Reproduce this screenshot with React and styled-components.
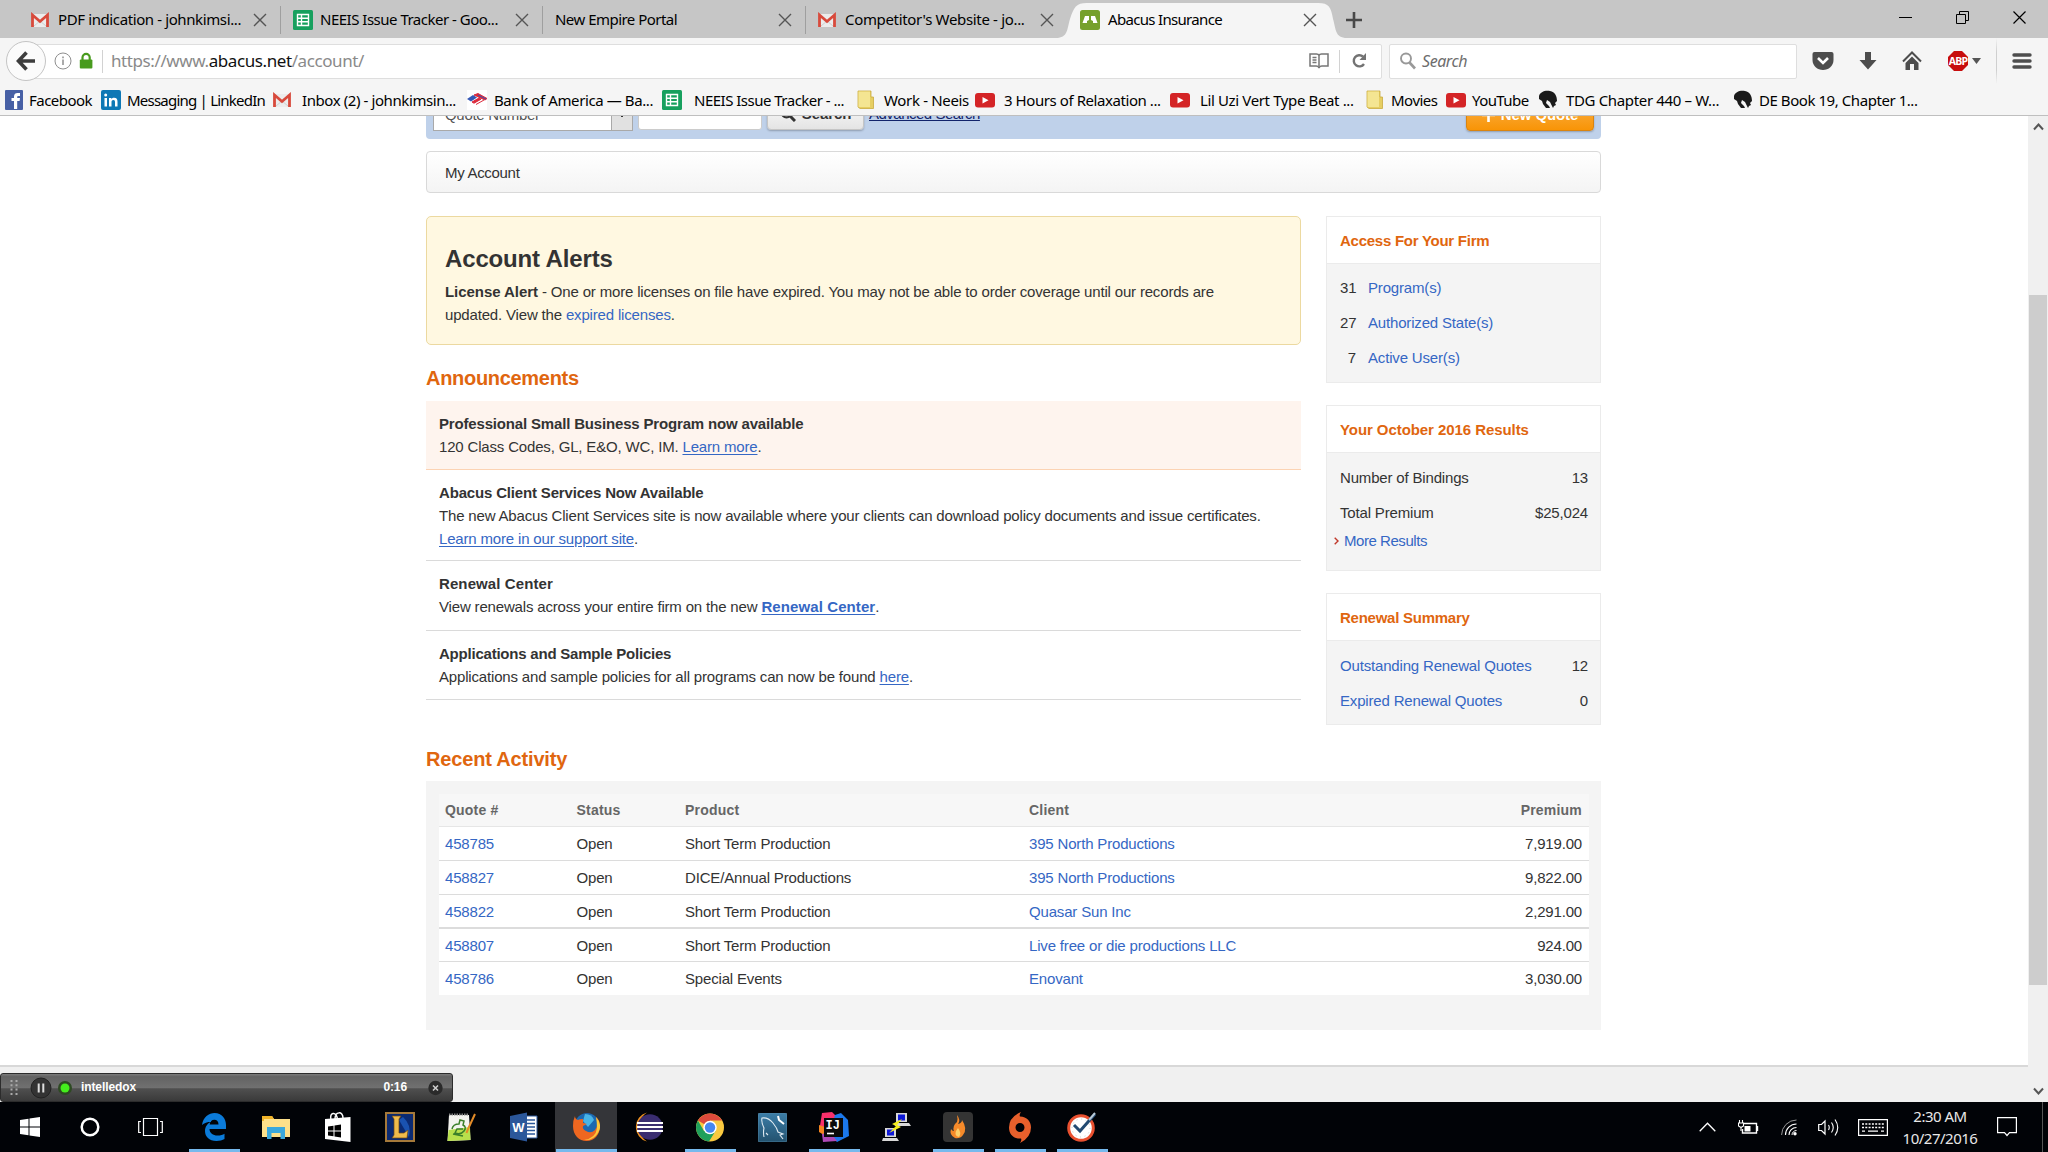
import React from 'react';
import styled, { createGlobalStyle, css } from 'styled-components';

const GlobalStyle = createGlobalStyle`
  * { box-sizing: border-box; }
  body { margin: 0; background: #fff; overflow: hidden; }
  h2, h3, p { margin: 0; }
  svg { display: block; flex: none; }
`;

const uiFont = '"Noto Sans", "Open Sans", sans-serif';
const pageFont = '"Liberation Sans", Arial, sans-serif';

/* ---------- window ---------- */

const Screen = styled.div`
  position: relative;
  display: flex;
  flex-direction: column;
  width: 2048px;
  height: 1152px;
  overflow: hidden;
`;

const Chrome = styled.header`
  flex: none;
  height: 116px;
  background: #f5f5f5;
  border-bottom: 1px solid #bfbfbf;
  font: 15px/20px ${uiFont};
  color: #000;
`;

const Label = styled.span`
  white-space: nowrap;
  letter-spacing: ${p => p.$ls || 0}px;
`;

/* ---------- tabs ---------- */

const TabStrip = styled.div`
  display: flex;
  height: 38px;
  background: #c6c6c6;
`;

const Tab = styled.div`
  position: relative;
  display: flex;
  align-items: center;
  flex: none;
  width: ${p => p.$width}px;
  padding: 2px 14px 0 ${p => p.$pad}px;
`;

const Divider = styled.i`
  position: absolute;
  right: 0;
  top: 6px;
  width: 1px;
  height: 28px;
  background: #9f9f9f;
`;

const TabShape = styled.svg`
  position: absolute;
  left: -12px;
  top: 0;
`;

const TabIcon = styled.span`
  position: relative;
  flex: none;
  width: 20px;
  margin-right: ${p => p.$gap}px;
`;

const TabTitle = styled(Label)`
  position: relative;
  flex: 1;
  margin-bottom: 2px;
`;

const TabClose = styled.svg`
  position: relative;
  stroke: #555;
  stroke-width: 1.4;
  fill: none;
`;

const NewTab = styled.svg`
  margin: 12px 0 0 15px;
`;

const WindowButtons = styled.div`
  display: flex;
  align-items: center;
  gap: 44px;
  height: 34px;
  margin-left: auto;
  padding-right: 22px;
`;

/* ---------- navigation ---------- */

const NavBar = styled.div`
  display: flex;
  align-items: center;
  height: 46px;
  padding-left: 6px;
`;

const BackButton = styled.button`
  position: relative;
  z-index: 1;
  flex: none;
  display: flex;
  align-items: center;
  justify-content: center;
  width: 40px;
  height: 40px;
  padding: 0;
  border: 1px solid #c4c4c4;
  border-radius: 50%;
  background: #fbfbfb;
`;

const Field = styled.div`
  display: flex;
  align-items: center;
  flex: none;
  width: ${p => p.$width}px;
  height: 35px;
  margin-left: ${p => p.$left}px;
  padding: 0 14px 0 ${p => p.$pad}px;
  border: 1px solid #dedede;
  border-radius: 2px;
  background: #fff;
`;

const SiteIcons = styled.span`
  display: flex;
  align-items: center;
  gap: 2px;
`;

const Url = styled.span`
  flex: 1;
  font-size: 17px;
  letter-spacing: -0.41px;
  color: #8a8a8a;
  b { font-weight: 400; color: #111; }
`;

const FieldRule = styled.i`
  width: 1px;
  height: 23px;
  margin: 0 ${p => p.$right}px 0 ${p => p.$left}px;
  background: #d2d2d2;
`;

const Placeholder = styled.span`
  margin-left: 5px;
  font-size: 16px;
  font-style: italic;
  letter-spacing: -0.45px;
  color: #6d6d6d;
`;

const NavTools = styled.div`
  display: flex;
  align-items: center;
  flex: 1;
  padding-left: 15px;
`;

const Tool = styled.span`
  display: flex;
  justify-content: center;
  width: 22px;
  margin-right: ${p => p.$gap}px;
`;

const ToolRule = styled.i`
  width: 1px;
  height: 46px;
  margin: 0 15px 0 13px;
  background: linear-gradient(#f5f5f5, #cfcfcf 30%, #cfcfcf 70%, #f5f5f5);
`;

/* ---------- bookmarks ---------- */

const Bookmarks = styled.nav`
  display: flex;
  align-items: center;
  height: 31px;
  padding-left: 4px;
`;

const Bookmark = styled.span`
  display: flex;
  align-items: center;
  flex: none;
  width: ${p => p.$width}px;
  gap: ${p => p.$gap || 6}px;
`;

/* ---------- page ---------- */

const Viewport = styled.div`
  display: flex;
  flex: none;
  height: 986px;
  overflow: hidden;
  font: 15px/23px ${pageFont};
  letter-spacing: -0.17px;
  color: #333;
`;

const Page = styled.div`
  display: flex;
  flex-direction: column;
  width: 2028px;
`;

const Container = styled.main`
  width: 1175px;
  margin: -35px 0 0 426px;
`;

const SearchBar = styled.div`
  display: flex;
  align-items: flex-end;
  height: 58px;
  padding: 0 7px 8px;
  border-radius: 4px;
  background: #bfd1ea;
`;

const Select = styled.div`
  display: flex;
  justify-content: space-between;
  width: 200px;
  height: 34px;
  padding-left: 11px;
  border: 1px solid #a9a9a9;
  background: #fff;
  line-height: 34px;
  letter-spacing: -0.3px;
  color: #555;
`;

const SelectArrow = styled.span`
  display: flex;
  justify-content: center;
  width: 21px;
  padding-top: 15px;
  border-left: 1px solid #a9a9a9;
  background: #e1e1e1;
`;

const TextInput = styled.div`
  width: 124px;
  height: 34px;
  margin: 0 5px 1px;
  border: 1px solid #ccc;
  border-radius: 3px;
  background: #fff;
`;

const Button = styled.button`
  display: flex;
  align-items: center;
  justify-content: center;
  gap: 6px;
  width: ${p => (p.$primary ? 128 : 97)}px;
  height: 34px;
  margin: 0 0 ${p => (p.$primary ? 0 : 1)}px;
  padding: 1px 0 0;
  border: 1px solid #c5c5c5;
  border-radius: 4px;
  background: linear-gradient(#fff, #e4e4e4);
  box-shadow: 0 1px 2px rgba(0, 0, 0, 0.25);
  font: bold 15px ${pageFont};
  letter-spacing: -0.1px;
  color: #333;
  ${p => p.$primary && css`
    margin-left: auto;
    border-color: #d98411;
    background: linear-gradient(#fbb450, #f89406);
    color: #fff;
  `}
`;

const AdvancedLink = styled.a`
  margin: 0 0 6px 5px;
  letter-spacing: -0.5px;
  color: #12246b;
  text-decoration: underline;
`;

const Breadcrumb = styled.div`
  height: 42px;
  margin-top: 12px;
  padding: 1px 18px 0;
  border: 1px solid #d9d9d9;
  border-radius: 4px;
  background: linear-gradient(#fff, #f4f4f4);
  line-height: 40px;
  letter-spacing: -0.3px;
`;

const Columns = styled.div`
  display: grid;
  grid-template-columns: 875px 275px;
  justify-content: space-between;
  margin-top: 23px;
`;

const Alert = styled.section`
  height: 129px;
  padding: 27px 80px 0 18px;
  border: 1px solid #ecd9a0;
  border-radius: 5px;
  background: #fff8e1;
`;

const AlertTitle = styled.h2`
  margin-bottom: 6px;
  font-size: 24px;
  line-height: 30px;
  letter-spacing: -0.15px;
`;

const Heading = styled.h2`
  margin: ${p => p.$top}px 0 ${p => p.$bottom}px;
  font-size: 20px;
  line-height: 24px;
  letter-spacing: ${p => p.$ls}px;
  color: #e0660f;
`;

const Link = styled.a`
  color: #3567c4;
  text-decoration: ${p => (p.$underline ? 'underline' : 'none')};
  text-underline-offset: 2px;
`;

const Strong = styled.b`
  letter-spacing: ${p => p.$ls}px;
`;

const Notice = styled.article`
  height: ${p => p.$height}px;
  padding: 11px 13px 0;
  border-bottom: 1px solid ${p => (p.$highlight ? '#fcd3b3' : '#dadada')};
  background: ${p => (p.$highlight ? '#fef4ee' : '#fff')};
`;

const Side = styled.aside`
  display: flex;
  flex-direction: column;
  gap: 22px;
`;

const Card = styled.section`
  height: ${p => p.$height}px;
  border: 1px solid #ebebeb;
  background: #f4f4f4;
`;

const CardTitle = styled.h3`
  height: 47px;
  margin-bottom: ${p => p.$gap}px;
  padding: 1px 13px 0;
  border-bottom: 1px solid #ebebeb;
  background: #fff;
  font-size: 15px;
  line-height: 46px;
  letter-spacing: ${p => p.$ls}px;
  color: #e0660f;
`;

const CardRow = styled.div`
  display: flex;
  justify-content: space-between;
  padding: 0 12px 0 13px;
  line-height: 35px;
`;

const CountRow = styled.div`
  display: grid;
  grid-template-columns: 16px auto;
  justify-content: start;
  gap: 12px;
  padding-left: 13px;
  line-height: 35px;
  > :first-child { text-align: right; }
`;

const MoreRow = styled.div`
  display: flex;
  align-items: center;
  gap: 5px;
  margin-top: -1px;
  padding-left: 7px;
  letter-spacing: -0.45px;
`;

const Panel = styled.section`
  height: 249px;
  padding: 13px 12px 0 13px;
  background: #f4f4f4;
`;

const Row = styled.div`
  display: grid;
  grid-template-columns: 131.5px 108.5px 344px 1fr auto;
  align-items: center;
  height: ${p => p.$height}px;
  padding: 0 7px 0 6px;
  border-bottom: ${p => p.$rule}px solid #dcdcdc;
  background: #fff;
`;

const HeadRow = styled(Row)`
  border-color: #e6e6e6;
  background: #f7f7f7;
  font-size: 14px;
  font-weight: bold;
  letter-spacing: 0.2px;
  color: #666;
`;

const PageFooter = styled.footer`
  height: 37px;
  margin-top: 35px;
  border-top: 2px solid #d8d8d8;
  background: #f0f0f0;
`;

const Scrollbar = styled.div`
  display: flex;
  flex-direction: column;
  align-items: center;
  justify-content: space-between;
  width: 20px;
  padding: 7px 0;
  background: #f0f0f0;
`;

const Thumb = styled.div`
  width: 18px;
  height: 690px;
  margin: 0 0 -61px;
  background: #cdcdcd;
`;

/* ---------- recorder ---------- */

const Recorder = styled.div`
  position: absolute;
  left: 0;
  top: 1073px;
  display: flex;
  align-items: center;
  width: 453px;
  height: 29px;
  padding: 0 9px;
  border: 1px solid #2c2c2c;
  border-radius: 3px;
  background: linear-gradient(#7b7b7b 0, #636363 10%, #707070 50%, #4f4f4f 55%, #3a3a3a);
  font: bold 12px ${pageFont};
  letter-spacing: -0.1px;
  color: #fff;
`;

const RecorderName = styled.span`
  flex: 1;
  margin: 0 0 2px 9px;
`;

const Elapsed = styled.span`
  margin: 0 20px 2px 0;
`;

const PauseIcon = styled.svg`
  margin: 0 6px 0 11px;
`;

/* ---------- taskbar ---------- */

const Taskbar = styled.footer`
  display: flex;
  height: 50px;
  background: #010307;
  font: 15px/22px ${uiFont};
  color: #e8e8e8;
`;

const Task = styled.div`
  display: flex;
  align-items: center;
  justify-content: center;
  flex: none;
  width: ${p => p.$width || 62}px;
  height: 50px;
  padding-right: ${p => p.$shift || 0}px;
  background-color: ${p => (p.$active ? '#343539' : 'transparent')};
  background-image: linear-gradient(#76b9ed, #76b9ed);
  background-repeat: no-repeat;
  background-position: bottom;
  background-size: ${p => (p.$active ? '61px 3px' : p.$open ? '51px 3px' : '0 0')};
`;

const Tray = styled.div`
  display: flex;
  align-items: center;
  margin-left: auto;
`;

const TrayIcon = styled.span`
  margin-right: ${p => p.$gap}px;
`;

const Clock = styled.div`
  width: 80px;
  margin-right: 17px;
  text-align: center;
  letter-spacing: -0.5px;
`;

const ShowDesktop = styled.i`
  width: 6px;
  height: 50px;
  margin-left: 25px;
  border-left: 1px solid #555;
`;

/* ---------- icons ---------- */

const Gmail = () => (
  <svg width="18" height="20" viewBox="0 0 18 20">
    <rect x="1" y="4" width="16" height="13" fill="#ececec" />
    <path d="M3 16 9 11l6 5" fill="none" stroke="#cfcfcf" />
    <path d="M1.500 17V5L9 11.500 16.500 5v12" fill="none" stroke="#d84a3c" strokeWidth="2.800" />
  </svg>
);

const Sheets = () => (
  <svg width="20" height="20" viewBox="0 0 20 20">
    <rect width="20" height="20" rx="1.500" fill="#17a05e" />
    <path d="M4.500 4.500h11v11h-11zM4.500 8.200h11M4.500 11.800h11M8.500 4.500v11" fill="none" stroke="#fff" strokeWidth="1.400" />
  </svg>
);

const Abacus = () => (
  <svg width="20" height="20" viewBox="0 0 20 20">
    <rect width="20" height="20" rx="2.500" fill="#76a02c" />
    <path d="M5 6h4v4l-2 1v2H2.500zM15 6h-4v4l2 1v2h4.500z" fill="#fff" />
  </svg>
);

const Facebook = () => (
  <svg width="19" height="20" viewBox="0 0 19 20">
    <rect x="1" width="18" height="20" rx="1" fill="#4760a5" />
    <path d="M10 19v-8H7.500V8H10V6.500C10 4 11.500 3 13.500 3H16v3h-1.500c-1 0-1.300.4-1.300 1.200V8H16l-.4 3h-2.400v8z" fill="#fff" />
  </svg>
);

const LinkedIn = () => (
  <svg width="20" height="20" viewBox="0 0 20 20">
    <rect width="20" height="20" rx="2" fill="#0e78b5" />
    <path d="M3.500 8H6v8.500H3.500zM8 8h2.400v1.200C11 8.300 12 7.800 13.200 7.800c2.400 0 3.300 1.500 3.300 3.900v4.800H14V12c0-1.300-.4-2.100-1.600-2.100s-1.900.9-1.900 2.200v4.400H8z" fill="#fff" />
    <circle cx="4.700" cy="5" r="1.500" fill="#fff" />
  </svg>
);

const BankFlag = () => (
  <svg width="20" height="20" viewBox="0 0 20 20">
    <rect width="20" height="20" fill="#fff" />
    <path d="M0 9 6 5l4 2.500-6 4z" fill="#3558b5" />
    <path d="m7 5 4-1.500 9 5-2 1.500zM5 12l7-4 2 1.200-7 4zM9 14.500l8-4.500" fill="#dc2a3c" stroke="#dc2a3c" />
    <path d="m11 5 8 4" stroke="#3558b5" />
  </svg>
);

const Folder = () => (
  <svg width="18" height="20" viewBox="0 0 18 20">
    <path d="M1 1h13v6h2.500v11.500H3L1 17z" fill="#e6ce62" stroke="#c9ab3f" strokeWidth=".8" />
    <path d="M1.500 1.500H13V17H1.500z" fill="#f4e592" />
  </svg>
);

const YouTube = () => (
  <svg width="20" height="20" viewBox="0 0 20 20">
    <rect y="3" width="20" height="14.500" rx="3" fill="#d42426" />
    <path d="m7.500 7 6 3.200-6 3.300z" fill="#fff" />
  </svg>
);

const Horse = () => (
  <svg width="18" height="20" viewBox="0 0 18 20">
    <path d="M0 6C1 2 6 0 11 1c5 1 7 5 7 10l-2 2 1 2-2 1-1 2-3-6-3-2-1 3 3 3 1 2H7l-3-4-1-3-3-2z" fill="#1b1b1b" />
  </svg>
);

const Close = () => (
  <TabClose width="14" height="14" viewBox="0 0 14 14"><path d="m1 1 12 12M13 1 1 13" /></TabClose>
);

const bookmarks = [
  [Facebook, 'Facebook', -0.53, 97],
  [LinkedIn, 'Messaging | LinkedIn', -0.78, 172],
  [Gmail, 'Inbox (2) - johnkimsin...', -0.41, 194, 11],
  [BankFlag, 'Bank of America — Ba...', -0.4, 195, 7],
  [Sheets, 'NEEIS Issue Tracker - ...', -0.51, 195, 12],
  [Folder, 'Work - Neeis', -0.33, 118, 9],
  [YouTube, '3 Hours of Relaxation ...', -0.43, 195, 9],
  [YouTube, 'Lil Uzi Vert Type Beat ...', -0.37, 196, 10],
  [Folder, 'Movies', -0.5, 80, 7],
  [YouTube, 'YouTube', -0.59, 93],
  [Horse, 'TDG Chapter 440 – W...', -0.35, 195, 9],
  [Horse, 'DE Book 19, Chapter 1...', -0.44, 200, 7],
];

const quotes = [
  ['458785', 'Short Term Production', '395 North Productions', '7,919.00', 34, 1],
  ['458827', 'DICE/Annual Productions', '395 North Productions', '9,822.00', 34, 1],
  ['458822', 'Short Term Production', 'Quasar Sun Inc', '2,291.00', 34, 2],
  ['458807', 'Short Term Production', 'Live free or die productions LLC', '924.00', 33, 1],
  ['458786', 'Special Events', 'Enovant', '3,030.00', 33, 0],
];

function BrowserChrome() {
  return (
    <Chrome>
      <TabStrip>
        <Tab $width={281} $pad={31}><TabIcon $gap={7}><Gmail /></TabIcon><TabTitle $ls={-0.39}>PDF indication - johnkimsi...</TabTitle><Close /><Divider /></Tab>
        <Tab $width={262} $pad={12}><TabIcon $gap={7}><Sheets /></TabIcon><TabTitle $ls={-0.5}>NEEIS Issue Tracker - Goo...</TabTitle><Close /><Divider /></Tab>
        <Tab $width={263} $pad={12}><TabTitle $ls={-0.53}>New Empire Portal</TabTitle><Close /><Divider /></Tab>
        <Tab $width={262} $pad={12}><TabIcon $gap={7}><Gmail /></TabIcon><TabTitle $ls={-0.33}>Competitor's Website - jo...</TabTitle><Close /></Tab>
        <Tab $width={263} $pad={12}>
          <TabShape width="291" height="38" viewBox="0 0 291 38">
            <path d="M0 38C12 38 11 29 14 19 18 7 20 3 31 3H262c11 0 13 4 15 16 3 10 2 19 14 19z" fill="#f5f5f5" />
          </TabShape>
          <TabIcon $gap={8}><Abacus /></TabIcon><TabTitle $ls={-0.68}>Abacus Insurance</TabTitle><Close />
        </Tab>
        <NewTab width="16" height="16" viewBox="0 0 16 16"><path d="M8 0v16M0 8h16" stroke="#484848" strokeWidth="2.600" /></NewTab>
        <WindowButtons>
          <svg width="13" height="13" viewBox="0 0 13 13"><path d="M0 6.500h13" stroke="#000" /></svg>
          <svg width="13" height="13" viewBox="0 0 13 13"><path d="M.5 3.500h9v9h-9zM3.500 3.500v-3h9v9h-3" fill="none" stroke="#000" /></svg>
          <svg width="13" height="13" viewBox="0 0 13 13"><path d="m.5.5 12 12M12.500.5l-12 12" stroke="#000" strokeWidth="1.200" /></svg>
        </WindowButtons>
      </TabStrip>
      <NavBar>
        <BackButton>
          <svg width="20" height="20" viewBox="0 0 20 20"><path d="M10.500 1.500 2.500 10l8 8.500M3 10h16" fill="none" stroke="#3d3d3d" strokeWidth="3.600" /></svg>
        </BackButton>
        <Field $width={1348} $left={-12} $pad={19}>
          <SiteIcons>
            <svg width="18" height="18" viewBox="0 0 18 18"><circle cx="9" cy="9" r="8" fill="none" stroke="#8f8f8f" /><path d="M9 7.500V13M9 4.500v1.800" stroke="#8f8f8f" strokeWidth="1.500" /></svg>
            <svg width="20" height="18" viewBox="0 0 20 18"><path d="M8.500 8V5.500a3.600 3.600 0 0 1 7.200 0V8" fill="none" stroke="#489b1e" strokeWidth="2.200" /><rect x="5.800" y="7.500" width="12.600" height="9" rx="1" fill="#489b1e" /></svg>
          </SiteIcons>
          <FieldRule $left={8} $right={8} />
          <Url>https://www.<b>abacus.net</b>/account/</Url>
          <svg width="20" height="18" viewBox="0 0 20 18"><path d="M1 2h6.500q2 0 2.500 1.500Q10.500 2 12.500 2H19v12h-6q-2.500 0-3 2-.5-2-3-2H1zM10 3.500V14M3.500 5.500h4M3.500 8h4M3.500 10.500h4" fill="none" stroke="#777" strokeWidth="1.500" /></svg>
          <FieldRule $left={10} $right={11} />
          <svg width="16" height="16" viewBox="0 0 16 16"><path d="M13 11a5.600 5.600 0 1 1-1-7.500" fill="none" stroke="#737373" strokeWidth="2.400" /><path d="M15 0v7H8.500z" fill="#737373" /></svg>
        </Field>
        <Field $width={408} $left={7} $pad={9}>
          <svg width="18" height="18" viewBox="0 0 18 18"><circle cx="7" cy="6.500" r="5" fill="none" stroke="#999" strokeWidth="1.900" /><path d="m10.500 10.500 5.500 6" stroke="#999" strokeWidth="2.600" /></svg>
          <Placeholder>Search</Placeholder>
        </Field>
        <NavTools>
          <Tool $gap={23}><svg width="22" height="20" viewBox="0 0 22 20"><path d="M2.500 1h17q2 0 2 2v6c0 6-5 10-10.500 10S.5 15 .5 9V3q0-2 2-2z" fill="#4d4d4d" /><path d="m6 7 5 5 5-5" fill="none" stroke="#fff" strokeWidth="2.600" /></svg></Tool>
          <Tool $gap={22}><svg width="18" height="20" viewBox="0 0 18 20"><path d="M6 1h6v8h5.500L9 18.500.5 9H6z" fill="#4d4d4d" /></svg></Tool>
          <Tool $gap={24}><svg width="20" height="20" viewBox="0 0 20 20"><path d="m1 10.500 9-9 9 9" fill="none" stroke="#4d4d4d" strokeWidth="2" /><path d="m10 5.500 6.500 6.500v7h-4.500v-6H8v6H3.500v-7z" fill="#4d4d4d" /></svg></Tool>
          <Tool $gap={0}>
            <svg width="22" height="22" viewBox="0 0 22 22"><path d="M7 1h8l6 6v8l-6 6H7l-6-6V7z" fill="#c70d0d" /><text x="11" y="14.800" fill="#fff" fontFamily="Open Sans" fontWeight="bold" fontSize="10.500" letterSpacing="-.8" textAnchor="middle">ABP</text></svg>
          </Tool>
          <svg width="14" height="8" viewBox="0 0 14 8"><path d="M3 1h9L7.500 7z" fill="#555" /></svg>
          <ToolRule />
          <svg width="20" height="18" viewBox="0 0 20 18"><path d="M2 3h16M2 9h16M2 15h16" stroke="#4d4d4d" strokeWidth="3.400" strokeLinecap="round" /></svg>
        </NavTools>
      </NavBar>
      <Bookmarks>
        {bookmarks.map(([Icon, text, ls, width, gap], i) => (
          <Bookmark key={i} $width={width} $gap={gap}><Icon /><Label $ls={ls}>{text}</Label></Bookmark>
        ))}
      </Bookmarks>
    </Chrome>
  );
}

function AccountPage() {
  return (
    <Page>
      <Container>
        <SearchBar>
          <Select>Quote Number<SelectArrow><svg width="8" height="6" viewBox="0 0 8 6"><path d="m1 1 3 3 3-3" fill="none" stroke="#333" /></svg></SelectArrow></Select>
          <TextInput />
          <Button>
            <svg width="16" height="16" viewBox="0 0 16 16"><circle cx="6.500" cy="6.500" r="4.800" fill="none" stroke="#333" strokeWidth="2.200" /><path d="m10 10 5 5" stroke="#333" strokeWidth="3" /></svg>
            Search
          </Button>
          <AdvancedLink>Advanced Search</AdvancedLink>
          <Button $primary>
            <svg width="13" height="14" viewBox="0 0 13 14"><path d="M6.500 0v14M0 7h13" stroke="#fff" strokeWidth="2.600" /></svg>
            New Quote
          </Button>
        </SearchBar>
        <Breadcrumb>My Account</Breadcrumb>
        <Columns>
          <div>
            <Alert>
              <AlertTitle>Account Alerts</AlertTitle>
              <p><Strong $ls={-0.05}>License Alert</Strong> - One or more licenses on file have expired. You may not be able to order coverage until our records are<br />updated. View the <Link>expired licenses</Link>.</p>
            </Alert>
            <Heading $top={21} $bottom={11} $ls={-0.3}>Announcements</Heading>
            <Notice $height={69} $highlight>
              <b>Professional Small Business Program now available</b>
              <p>120 Class Codes, GL, E&amp;O, WC, IM. <Link $underline>Learn more</Link>.</p>
            </Notice>
            <Notice $height={91}>
              <b>Abacus Client Services Now Available</b>
              <p>The new Abacus Client Services site is now available where your clients can download policy documents and issue certificates. <Link $underline>Learn more in our support site</Link>.</p>
            </Notice>
            <Notice $height={70}>
              <Strong $ls={0.1}>Renewal Center</Strong>
              <p>View renewals across your entire firm on the new <Strong $ls={0.1}><Link $underline>Renewal Center</Link></Strong>.</p>
            </Notice>
            <Notice $height={69}>
              <Strong $ls={-0.22}>Applications and Sample Policies</Strong>
              <p>Applications and sample policies for all programs can now be found <Link $underline>here</Link>.</p>
            </Notice>
          </div>
          <Side>
            <Card $height={167}>
              <CardTitle $gap={6} $ls={-0.26}>Access For Your Firm</CardTitle>
              <CountRow><span>31</span><Link>Program(s)</Link></CountRow>
              <CountRow><span>27</span><Link>Authorized State(s)</Link></CountRow>
              <CountRow><span>7</span><Link>Active User(s)</Link></CountRow>
            </Card>
            <Card $height={166}>
              <CardTitle $gap={7} $ls={-0.07}>Your October 2016 Results</CardTitle>
              <CardRow><span>Number of Bindings</span><span>13</span></CardRow>
              <CardRow><span>Total Premium</span><span>$25,024</span></CardRow>
              <MoreRow><svg width="5" height="8" viewBox="0 0 5 8"><path d="m.7.7 3.300 3.300L.7 7.300" fill="none" stroke="#c0392b" strokeWidth="1.400" /></svg><Link>More Results</Link></MoreRow>
            </Card>
            <Card $height={132}>
              <CardTitle $gap={7} $ls={-0.25}>Renewal Summary</CardTitle>
              <CardRow><Link>Outstanding Renewal Quotes</Link><span>12</span></CardRow>
              <CardRow><Link>Expired Renewal Quotes</Link><span>0</span></CardRow>
            </Card>
          </Side>
        </Columns>
        <Heading $top={22} $bottom={10} $ls={-0.17}>Recent Activity</Heading>
        <Panel>
          <HeadRow $height={33} $rule={1}><span>Quote #</span><span>Status</span><span>Product</span><span>Client</span><span>Premium</span></HeadRow>
          {quotes.map(([id, product, client, premium, height, rule]) => (
            <Row key={id} $height={height} $rule={rule}>
              <Link>{id}</Link><span>Open</span><span>{product}</span><Link>{client}</Link><span>{premium}</span>
            </Row>
          ))}
        </Panel>
      </Container>
      <PageFooter />
    </Page>
  );
}

const Edge = () => (
  <svg width="26" height="28" viewBox="0 0 26 28"><path d="M1 12C2 4 8 0 13.500 0 21 0 25 6 25 12v4H8.500c0 4 3.500 6.500 8 6.500 3 0 5.500-.8 7-1.800V26c-2 1.300-5 2-8 2C8 28 4 23.500 4 18c0-4.500 2.500-7.500 6-9.300C6.500 9 3 10 1 12zm7.600-.6h8.900c0-3-1.500-4.700-4.200-4.700-2.500 0-4.200 1.700-4.700 4.700z" fill="#0b7bd9" /></svg>
);
const Explorer = () => (
  <svg width="28" height="26" viewBox="0 0 28 26"><path d="M0 2h10l2 3h16v18H0z" fill="#fde08a" /><path d="M0 2h10l2 3H2v2H0z" fill="#f0b429" /><path d="M5 13h18v12h-4.500v-6h-9v6H5z" fill="#3aa8dc" /></svg>
);
const Store = () => (
  <svg width="28" height="31" viewBox="0 0 28 31"><path d="M1 7 26.500 5v25L1 27z" fill="#fff" /><path d="M7 8C5 0 12-1 13.500 7M11 7C11-1 19-1 19 6" fill="none" stroke="#fff" strokeWidth="1.500" /><path d="m4 14.500 5.500-.8v4.800H4zM10.500 13.500l6.500-1v6h-6.500zM4 19.500h5.500v4.800l-5.500-.8zM10.500 19.500H17v6l-6.500-1z" fill="#000" /></svg>
);
const League = () => (
  <svg width="30" height="30" viewBox="0 0 30 30"><rect x="1" y="1" width="28" height="28" fill="#0b2a72" stroke="#a5793a" strokeWidth="2" /><path d="M18 5q9 8 6 20L14 8z" fill="#1a52b0" /><path d="M7 4h9l-2 3v14h5l4-3-1 8H7l2-3V7z" fill="#f0bb4b" stroke="#704712" strokeWidth=".7" /></svg>
);
const Notepad = () => (
  <svg width="29" height="30" viewBox="0 0 29 30"><path d="M2 3h20l1.500 25-23 1z" fill="#f3f3ef" /><path d="M1.500 18 23 15l.5 13-23 1z" fill="#b8e04c" /><path d="M2 2.500h20" stroke="#888" strokeWidth="2" strokeDasharray="1.500 1" /><path d="M5 17q1-5 7-5l1-4 4 1-1 4q4 2 1 6t-9 2l2-4h6M6 22l10 2" fill="none" stroke="#3b7f2a" strokeWidth="1.500" /><path d="m28 2-6.500 14-2 5" fill="none" stroke="#e28b28" strokeWidth="2" /></svg>
);
const Word = () => (
  <svg width="28" height="30" viewBox="0 0 28 30"><path d="M14 4h13v22H14z" fill="#fff" stroke="#2b579a" /><path d="M16 8h9M16 11.500h9M16 15h9M16 18.500h9M16 22h9" stroke="#2b579a" strokeWidth="1.500" /><path d="m0 4 17-3.500v29L0 26z" fill="#2b579a" /><text x="8.300" y="20" fontFamily="Liberation Sans" fontWeight="bold" fontSize="13" fill="#fff" textAnchor="middle">W</text></svg>
);
const Firefox = () => (
  <svg width="28" height="30" viewBox="0 0 28 30"><circle cx="15" cy="13" r="12" fill="#1c68b0" /><path d="M13 2q7 0 9 6l-6 7-5-6z" fill="#48b4e6" /><path d="M3 4q-2 4-2 10c0 9 6 15 13.500 15S28 23 28 14q0-6-4-9 3 8-1 13-4 4-9 1-4-2-3-5l4-2-4-1V7Q7 7 6 8 3 7 3 4z" fill="#ee6720" /><path d="M24 5q7 8 2 16t-14 7q12-2 13-12 0-6-1-11z" fill="#fbc83c" /></svg>
);
const Eclipse = () => (
  <svg width="30" height="30" viewBox="0 0 30 30"><path d="M14 .5A15 15 0 0 0 14 29.500 17 17 0 0 1 14 .5z" fill="#f3941e" /><circle cx="17" cy="15" r="12.800" fill="#3a2d70" /><path d="M4 11h26M4 15h26M4 19h26" stroke="#fff" strokeWidth="1.900" /></svg>
);
const Chromium = () => (
  <svg width="28" height="29" viewBox="0 0 28 28"><circle cx="14" cy="14" r="14" fill="#f9c940" /><path d="M14 14 1.900 7A14 14 0 0 1 26.100 7H14z" fill="#dc4a3c" /><path d="M1.900 7A14 14 0 0 0 13 28l6.500-10.500L14 14 8 17.500z" fill="#1fa05c" /><circle cx="14" cy="14" r="6.700" fill="#fff" /><circle cx="14" cy="14" r="5.200" fill="#4687f0" /></svg>
);
const MySql = () => (
  <svg width="29" height="29" viewBox="0 0 29 29"><defs><linearGradient id="mysql" x2="0" y2="1"><stop stopColor="#3c7ea8" /><stop offset="1" stopColor="#23526f" /></linearGradient></defs><rect width="29" height="29" rx="2" fill="url(#mysql)" stroke="#5b90af" strokeWidth=".7" /><path d="M6 24q-1-5 0-9Q3 9 4 5q6-1 11 5 4 5 5 9l5 2-3 1 3 4M8 20l2 2" fill="none" stroke="#dfeaf1" strokeWidth="1.100" /><path d="m20 3 1 4 5 4" fill="none" stroke="#fff" strokeWidth="2" /></svg>
);
const IntelliJ = () => (
  <svg width="30" height="30" viewBox="0 0 30 30"><path d="m3 1 10-1 5 5-1 11L0 20z" fill="#f9306b" /><path d="m0 13 6 2-1 8-5-3z" fill="#f58520" /><path d="m16 3 6-2 7 7 1 16-12 6-8-7z" fill="#1b78ec" /><path d="m3 22 8-2 7 9-14 1z" fill="#ae49b8" /><rect x="5" y="6" width="19" height="19" fill="#0a0a0a" /><text x="6.500" y="16.500" fontFamily="Liberation Mono" fontWeight="bold" fontSize="12" fill="#fff">IJ</text><path d="M8 21.500h7" stroke="#fff" strokeWidth="1.600" /></svg>
);
const Putty = () => (
  <svg width="29" height="30" viewBox="0 0 29 30"><path d="M14 1h11v9H14zM12 11h15l2 3H13z" fill="#d8d8d8" /><path d="M16 2.500h7v6h-7z" fill="#0c17d8" /><path d="M3 16h11v9H3zM1 26h14l2 3H0z" fill="#d8d8d8" /><path d="M5 17.500h7v6H5z" fill="#0c17d8" /><path d="m20 7-10 5 4 2-7 7 12-6-4-2z" fill="#f5ee1b" /></svg>
);
const Flame = () => (
  <svg width="30" height="30" viewBox="0 0 30 30"><rect width="30" height="30" rx="4" fill="#343434" /><path d="M14 3q4 5 1 9 4-1 4-4 6 9 1 15-3 4-8 3-6-3-4-9 1 2 3 2-2-5 3-9 1-3 0-7z" fill="#f68a2a" /><path d="M15 16q4 5 1 9-5-1-3-6z" fill="#fdd06a" /></svg>
);
const Origin = () => (
  <svg width="24" height="31" viewBox="0 0 24 31"><path d="M13 0q-2 3-1 4.500c7 0 11 5 11 11q0 10-11 15.500 2-3 1-4.500C5 27 1 22 1 15.500Q1 5 13 0zm-1 11a4.500 4.500 0 1 0 0 9 4.500 4.500 0 0 0 0-9z" fill="#e8602c" /></svg>
);
const TimeCheck = () => (
  <svg width="30" height="31" viewBox="0 0 30 31"><circle cx="14" cy="16" r="12.300" fill="#fff" stroke="#e9502f" strokeWidth="3" /><circle cx="14" cy="16" r="9" fill="none" stroke="#c9c9c9" strokeWidth="1" strokeDasharray="1 3.700" /><path d="m7 13 6 6L28 2" fill="none" stroke="#234a72" strokeWidth="3" /><path d="m22 8 6-7" stroke="#b9c9d7" strokeWidth="2" /></svg>
);

function SystemTaskbar() {
  return (
    <Taskbar>
      <Task $width={60}><svg width="20" height="20" viewBox="0 0 20 20"><path d="m0 3 8.500-1.200v7.700H0zM9.500 1.600 20 0v9.500H9.500zM0 10.500h8.500v7.700L0 17zM9.500 10.500H20V20L9.500 18.400z" fill="#fff" /></svg></Task>
      <Task $width={60}><svg width="20" height="20" viewBox="0 0 20 20"><circle cx="10" cy="10" r="8.300" fill="none" stroke="#fff" strokeWidth="2.500" /></svg></Task>
      <Task $width={63} $shift={2}><svg width="25" height="20" viewBox="0 0 25 20"><path d="M5.500 1.500h14v17h-14zM3 4.500H.7v11H3M22 4.500h2.300v11H22" fill="none" stroke="#fff" strokeWidth="1.200" /></svg></Task>
      <Task $open><Edge /></Task>
      <Task><Explorer /></Task>
      <Task><Store /></Task>
      <Task><League /></Task>
      <Task $shift={1}><Notepad /></Task>
      <Task><Word /></Task>
      <Task $active $shift={1}><Firefox /></Task>
      <Task $shift={1}><Eclipse /></Task>
      <Task $open><Chromium /></Task>
      <Task><MySql /></Task>
      <Task $open><IntelliJ /></Task>
      <Task><Putty /></Task>
      <Task $open $shift={1}><Flame /></Task>
      <Task $open><Origin /></Task>
      <Task $open><TimeCheck /></Task>
      <Tray>
        <TrayIcon $gap={22}><svg width="17" height="10" viewBox="0 0 17 10"><path d="m.7 9.300 7.800-8 7.800 8" fill="none" stroke="#fff" strokeWidth="1.300" /></svg></TrayIcon>
        <TrayIcon $gap={22}><svg width="21" height="15" viewBox="0 0 21 15"><path d="M5.500 3.500h13v9.500H4.500V9M19.500 6v5" fill="none" stroke="#fff" strokeWidth="1.400" /><path d="M6.500 6h6v5.500h-6z" fill="#fff" /><path d="M1.500 0v3M4.500 0v3M.5 3h5v3L3 7.500.5 6zM3 7v4" fill="none" stroke="#fff" strokeWidth="1.100" /></svg></TrayIcon>
        <TrayIcon $gap={21}><svg width="16" height="17" viewBox="0 0 16 17"><path d="M.6 16A15 15 0 0 1 15.500 1" fill="none" stroke="#999" /><path d="M4.500 16A11 11 0 0 1 15.500 5M8 16a7.500 7.500 0 0 1 7.500-7.500" fill="none" stroke="#fff" strokeWidth="1.100" /><path d="M11 16a4.500 4.500 0 0 1 4.500-4.500" fill="none" stroke="#fff" /><circle cx="14" cy="14.800" r="1.700" fill="#fff" /></svg></TrayIcon>
        <TrayIcon $gap={19}><svg width="21" height="19" viewBox="0 0 21 19"><path d="M.7 6.500H3.500L7 3v13l-3.500-3.500H.7z" fill="none" stroke="#fff" strokeWidth="1.200" /><path d="M10.500 7q1.500 2.500 0 5M13.500 4.500q3.500 5 0 10M17 1.500q5.500 8 0 16" fill="none" stroke="#fff" strokeWidth="1.100" /></svg></TrayIcon>
        <TrayIcon $gap={12}><svg width="30" height="17" viewBox="0 0 30 17"><path d="M.6.6h28.800v15.800H.600z" fill="none" stroke="#fff" strokeWidth="1.200" /><path d="M4 5h22M4 8.500h22" stroke="#fff" strokeWidth="1.300" strokeDasharray="2 1.300" /><path d="M4 12.200h3M10 12.200h10M23 12.200h3" stroke="#fff" strokeWidth="1.300" /></svg></TrayIcon>
        <Clock>2:30 AM<br />10/27/2016</Clock>
        <svg width="20" height="20" viewBox="0 0 20 20"><path d="M.6.600h18.800v15H12.500L10 18.500 7.500 15.600H.600z" fill="none" stroke="#fff" strokeWidth="1.200" /></svg>
        <ShowDesktop />
      </Tray>
    </Taskbar>
  );
}

export default function App() {
  return (
    <Screen>
      <GlobalStyle />
      <BrowserChrome />
      <Viewport>
        <AccountPage />
        <Scrollbar>
          <svg width="11" height="8" viewBox="0 0 11 8"><path d="m1 6.500 4.500-5 4.500 5" fill="none" stroke="#555" strokeWidth="2" /></svg>
          <Thumb />
          <svg width="11" height="8" viewBox="0 0 11 8"><path d="m1 1.500 4.500 5 4.500-5" fill="none" stroke="#555" strokeWidth="2" /></svg>
        </Scrollbar>
      </Viewport>
      <SystemTaskbar />
      <Recorder>
        <svg width="9" height="15" viewBox="0 0 9 15"><path d="M1.500 0v15M6.500 0v15" stroke="#aaa" strokeWidth="2" strokeDasharray="2 2.300" /></svg>
        <PauseIcon width="22" height="22" viewBox="0 0 22 22"><circle cx="11" cy="11" r="10" fill="#333" stroke="#222" /><path d="M8.700 6.500v9M13.300 6.500v9" stroke="#ddd" strokeWidth="2" /></PauseIcon>
        <svg width="14" height="16" viewBox="0 0 14 16"><circle cx="7" cy="8" r="7" fill="#2d4a22" /><circle cx="7" cy="8" r="4.500" fill="#44ee1c" /></svg>
        <RecorderName>intelledox</RecorderName>
        <Elapsed>0:16</Elapsed>
        <svg width="16" height="16" viewBox="0 0 16 16"><circle cx="8.500" cy="8" r="7.200" fill="#2a2a2a" /><path d="m6 5.500 5 5M11 5.500l-5 5" stroke="#ccc" strokeWidth="1.600" /></svg>
      </Recorder>
    </Screen>
  );
}
